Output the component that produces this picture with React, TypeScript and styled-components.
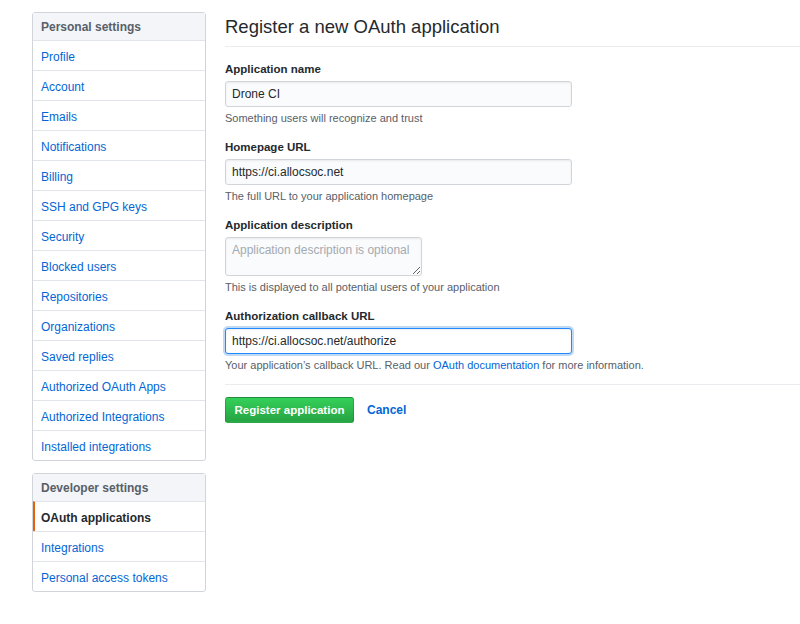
import React from 'react'
import styled, { createGlobalStyle } from 'styled-components'

const GlobalStyle = createGlobalStyle`
body {
  margin: 0;
  background: #fff;
  font-family: "Liberation Sans", Arial, sans-serif;
  color: #24292e;
}
`

const personal = [
  'Profile',
  'Account',
  'Emails',
  'Notifications',
  'Billing',
  'SSH and GPG keys',
  'Security',
  'Blocked users',
  'Repositories',
  'Organizations',
  'Saved replies',
  'Authorized OAuth Apps',
  'Authorized Integrations',
  'Installed integrations',
]

const developer = ['OAuth applications', 'Integrations', 'Personal access tokens']

const App = () => {
  return (
    <Page>
      <GlobalStyle />
      <Sidebar>
        <Menu>
          <MenuHeading>Personal settings</MenuHeading>
          {personal.map((p) => (
            <MenuItem key={p}>{p}</MenuItem>
          ))}
        </Menu>
        <Menu>
          <MenuHeading>Developer settings</MenuHeading>
          {developer.map((p, i) => (
            <MenuItem key={p} selected={i === 0}>
              {p}
            </MenuItem>
          ))}
        </Menu>
      </Sidebar>
      <Main>
        <Title>Register a new OAuth application</Title>
        <Group>
          <Label>Application name</Label>
          <Input defaultValue="Drone CI" />
          <Note>Something users will recognize and trust</Note>
        </Group>
        <Group>
          <Label>Homepage URL</Label>
          <Input defaultValue="https://ci.allocsoc.net" />
          <Note>The full URL to your application homepage</Note>
        </Group>
        <Group>
          <Label>Application description</Label>
          <TextArea placeholder="Application description is optional" />
          <Note>This is displayed to all potential users of your application</Note>
        </Group>
        <Group>
          <Label>Authorization callback URL</Label>
          <Input focused defaultValue="https://ci.allocsoc.net/authorize" />
          <Note>
            Your application’s callback URL. Read our <Link>OAuth documentation</Link> for more
            information.
          </Note>
        </Group>
        <Actions>
          <Button>Register application</Button>
          <Cancel>Cancel</Cancel>
        </Actions>
      </Main>
    </Page>
  )
}

export default App

const Page = styled.div`
display: flex;
align-items: flex-start;
padding: 12px 0 0 32px;
`
const Sidebar = styled.div`
width: 174px;
flex-shrink: 0;
display: flex;
flex-direction: column;
gap: 12px;
`
const Menu = styled.div`
border: 1px solid #d1d5da;
border-radius: 3px;
background: #fff;
`
const MenuHeading = styled.div`
height: 27px;
line-height: 28px;
padding-left: 8px;
background: #f3f5f8;
color: #586069;
font-size: 12px;
font-weight: 700;
`
const MenuItem = styled.div<{ selected?: boolean }>`
height: 29px;
line-height: 32px;
overflow: hidden;
border-top: 1px solid #e1e4e8;
padding-left: ${(p) => (p.selected ? '6px' : '8px')};
border-left: ${(p) => (p.selected ? '2px solid #e36209' : 'none')};
font-size: 12px;
color: ${(p) => (p.selected ? '#24292e' : '#0366d6')};
font-weight: ${(p) => (p.selected ? 700 : 400)};
cursor: pointer;
`
const Main = styled.div`
flex: 1;
margin-left: 19px;
`
const Title = styled.h2`
margin: 0 0 13px 0;
font-size: 18.5px;
font-weight: 400;
line-height: 29px;
padding-bottom: 5px;
border-bottom: 1px solid #eaecef;
`
const Group = styled.div`
display: flex;
flex-direction: column;
align-items: flex-start;
margin-bottom: 12px;
`
const Label = styled.label`
font-size: 11.5px;
font-weight: 700;
line-height: 18px;
margin-bottom: 3px;
`
const Input = styled.input<{ focused?: boolean }>`
box-sizing: border-box;
width: 347px;
height: 26px;
padding: 0 6px;
font-family: inherit;
font-size: 12px;
color: #24292e;
background: ${(p) => (p.focused ? '#fff' : '#fafbfc')};
border: 1px solid ${(p) => (p.focused ? '#2188ff' : '#d1d5da')};
border-radius: 3px;
box-shadow: ${(p) =>
  p.focused
    ? 'inset 0 1px 2px rgba(27,31,35,.075), 0 0 0 2px rgba(3,102,214,.25)'
    : 'inset 0 1px 2px rgba(27,31,35,.075)'};
outline: none;
`
const TextArea = styled.textarea`
box-sizing: border-box;
width: 197px;
height: 39px;
padding: 5px 6px;
font-family: inherit;
font-size: 12px;
background: #fafbfc;
border: 1px solid #d1d5da;
border-radius: 3px;
box-shadow: inset 0 1px 2px rgba(27,31,35,.075);
outline: none;
&::placeholder {
  color: #a3aab1;
}
`
const Note = styled.p`
margin: 3px 0 0 0;
font-size: 11px;
line-height: 16px;
color: #586069;
`
const Link = styled.a`
color: #0366d6;
cursor: pointer;
`
const Actions = styled.div`
display: flex;
align-items: center;
gap: 13px;
margin-top: -1px;
padding-top: 12px;
border-top: 1px solid #eaecef;
`
const Button = styled.button`
box-sizing: border-box;
height: 26px;
width: 129px;
padding: 0;
white-space: nowrap;
font-family: inherit;
font-size: 11.5px;
font-weight: 700;
color: #fff;
background: linear-gradient(-180deg, #34d058 0%, #28a745 90%);
border: 1px solid rgba(27,31,35,.2);
border-radius: 3px;
cursor: pointer;
`
const Cancel = styled.a`
font-size: 12px;
font-weight: 700;
color: #0366d6;
cursor: pointer;
`
